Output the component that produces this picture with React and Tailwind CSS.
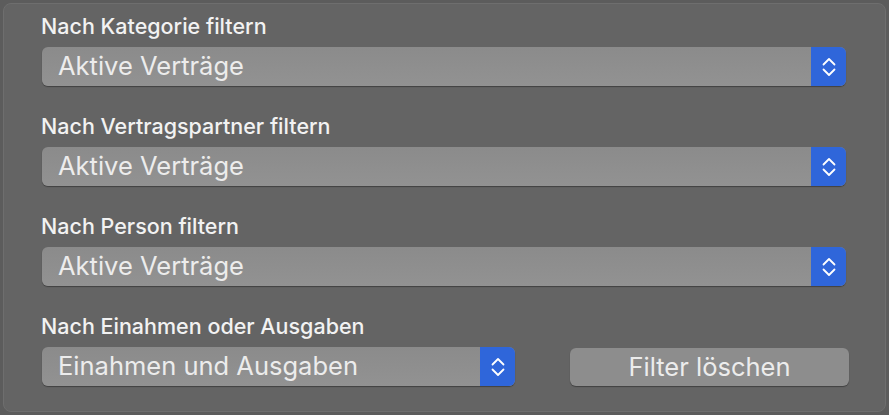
import React from "react";

function Chevrons() {
  return (
    <svg width="16" height="24" viewBox="0 0 16 24" fill="none" stroke="white" strokeWidth="1.8" strokeLinecap="round" strokeLinejoin="round">
      <path d="M2.5 9.5 L8 4 L13.5 9.5" />
      <path d="M2.5 14.5 L8 20 L13.5 14.5" />
    </svg>
  );
}

function Select({ value, className = "" }) {
  return (
    <div className={`flex h-[39px] rounded-[6px] bg-gradient-to-b from-[#8b8b8b] to-[#929292] shadow-[0_1px_1px_rgba(0,0,0,0.35)] overflow-hidden ${className}`}>
      <div className="flex-1 flex items-center pl-[16px] text-[25.5px] text-[#ececec]">{value}</div>
      <div className="w-[35px] bg-[#2f66da] flex items-center justify-center">
        <Chevrons />
      </div>
    </div>
  );
}

function Label({ children }) {
  return (
    <div className="h-[42px] flex items-center text-[21.5px] font-medium text-[#f2f2f2] pl-[37px]">{children}</div>
  );
}

function Group({ label, value }) {
  return (
    <div className="flex flex-col">
      <Label>{label}</Label>
      <Select value={value} className="ml-[38px] mr-[39px]" />
    </div>
  );
}

export default function App() {
  return (
    <div className="w-[889px] h-[415px] bg-[#5c5c5c] p-[3px]" style={{ fontFamily: "Inter, 'Liberation Sans', sans-serif" }}>
      <div className="h-full rounded-[8px] border border-[#6e6e6e] bg-[#646464] pt-[1px] flex flex-col gap-[19px]">
        <Group label="Nach Kategorie filtern" value="Aktive Verträge" />
        <Group label="Nach Vertragspartner filtern" value="Aktive Verträge" />
        <Group label="Nach Person filtern" value="Aktive Verträge" />
        <div className="flex flex-col">
          <Label>Nach Einahmen oder Ausgaben</Label>
          <div className="flex items-center pl-[38px] pr-[36px]">
            <Select value="Einahmen und Ausgaben" className="w-[473px]" />
            <button className="ml-[55px] flex-1 h-[38px] rounded-[6px] bg-[#8d8d8d] shadow-[0_1px_1px_rgba(0,0,0,0.35)] text-[25.5px] text-[#ececec]">
              Filter löschen
            </button>
          </div>
        </div>
      </div>
    </div>
  );
}
